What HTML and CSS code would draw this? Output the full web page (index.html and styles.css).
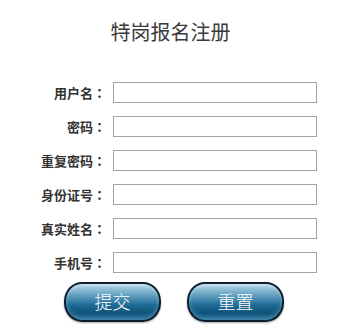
FILE: index.html
```html
<!DOCTYPE html>
<html lang="zh-CN">
<head>
<meta charset="utf-8">
<title>特岗报名注册</title>
<link rel="stylesheet" href="styles.css">
</head>
<body>
<div class="page">
  <h1 class="title">特岗报名注册</h1>
  <form class="form">
    <label class="lbl">用户名<span class="colon" lang="zh-Hant">：</span></label><input class="field" type="text">
    <label class="lbl">密码<span class="colon" lang="zh-Hant">：</span></label><input class="field" type="password">
    <label class="lbl">重复密码<span class="colon" lang="zh-Hant">：</span></label><input class="field" type="password">
    <label class="lbl">身份证号<span class="colon" lang="zh-Hant">：</span></label><input class="field" type="text">
    <label class="lbl">真实姓名<span class="colon" lang="zh-Hant">：</span></label><input class="field" type="text">
    <label class="lbl">手机号<span class="colon" lang="zh-Hant">：</span></label><input class="field" type="text">
  </form>
  <div class="actions">
    <button class="btn" type="button">提交</button>
    <button class="btn" type="button">重置</button>
  </div>
</div>
</body>
</html>
```
FILE: styles.css
```css
html, body {
  margin: 0;
  padding: 0;
  background: #ffffff;
}
body {
  font-family: "Noto Sans CJK SC", "Noto Sans", sans-serif;
  color: #333333;
}
.page {
  width: 358px;
  height: 335px;
  overflow: hidden;
}
.title {
  width: 341px;
  margin: 0;
  padding-top: 20px;
  text-align: center;
  font-size: 20px;
  font-weight: normal;
  line-height: 24px;
  color: #3a3a3a;
}
.form {
  display: grid;
  grid-template-columns: 70px 204px;
  column-gap: 7px;
  row-gap: 13px;
  margin: 38px 0 0 36px;
  align-items: center;
}
.lbl {
  text-align: right;
  font-family: "Noto Sans CJK SC", sans-serif;
  font-size: 13px;
  font-weight: bold;
  line-height: 21px;
  color: #333333;
  white-space: nowrap;
}
.colon {
  font-family: "Noto Sans CJK TC", "Noto Sans CJK SC", sans-serif;
}
.field {
  box-sizing: border-box;
  width: 204px;
  height: 21px;
  margin: 0;
  padding: 0 3px;
  border: 1px solid #a3a3a3;
  background: #ffffff;
  outline: none;
}
.actions {
  display: flex;
  gap: 26px;
  margin: 9px 0 0 64px;
}
.btn {
  box-sizing: border-box;
  width: 97px;
  height: 40px;
  margin: 0;
  padding: 0 0 2px 0;
  border: 2px solid #0b1f30;
  border-radius: 18px / 19px;
  background:
    linear-gradient(to bottom,
      #b4d6e7 0%,
      #8bbcd4 16%,
      #4b8fb3 40%,
      #1d6892 60%,
      #0e5278 82%,
      #1a6189 100%);
  box-shadow: inset 0 -3px 4px rgba(120, 180, 210, 0.45),
              inset 0 2px 2px rgba(255, 255, 255, 0.35),
              0 1px 2px rgba(0, 0, 0, 0.35);
  color: #ffffff;
  font-family: "Noto Sans CJK SC", "Noto Sans", sans-serif;
  font-size: 18px;
  font-weight: 300;
  line-height: 34px;
  text-align: center;
  cursor: pointer;
}
```
